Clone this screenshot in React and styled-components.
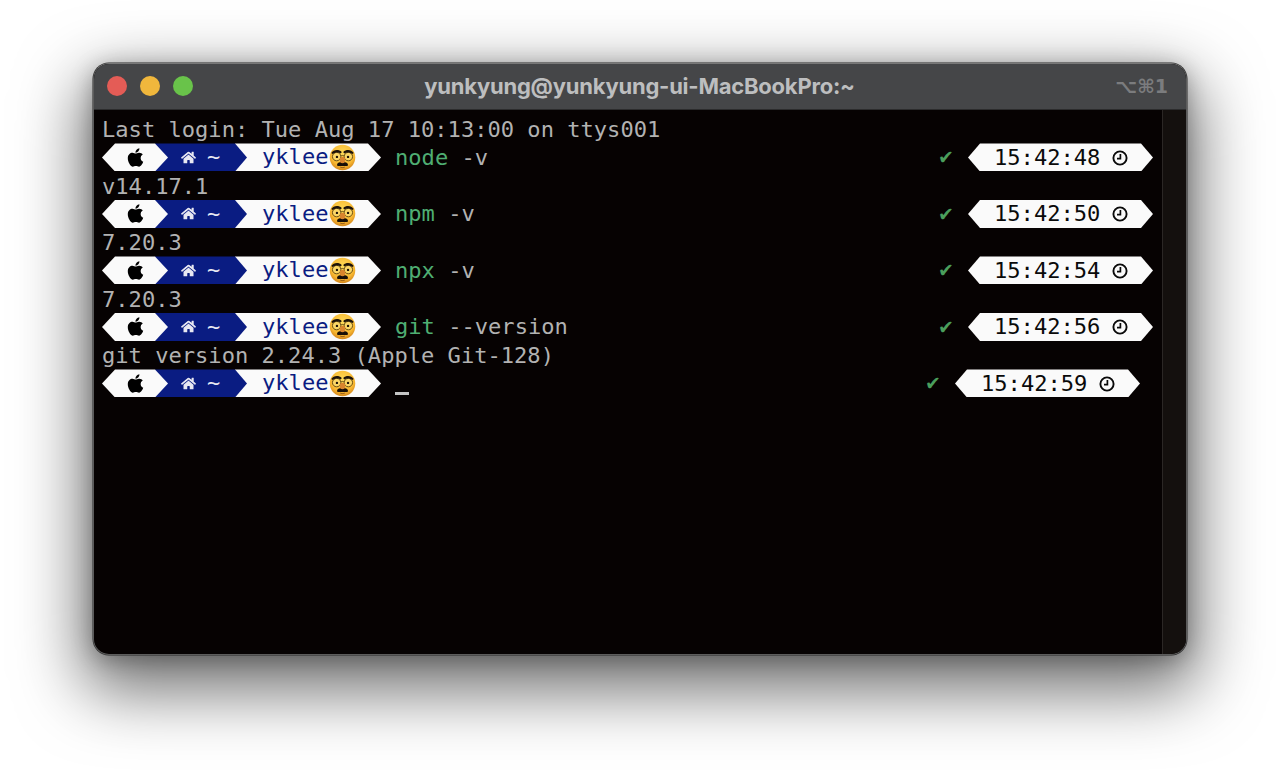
import React from "react";
import styled, { createGlobalStyle } from "styled-components";
import { FaApple, FaHome } from "react-icons/fa";

const GlobalStyle = createGlobalStyle`
  html, body {
    margin: 0;
    height: 100%;
    background: #fff;
    overflow: hidden;
  }
`;

const Page = styled.div`
  width: 1280px;
  height: 778px;
  padding: 63px 93px 123px;
  box-sizing: border-box;
`;

const Window = styled.div`
  height: 100%;
  display: flex;
  flex-direction: column;
  border: 1px solid #5c5c5c;
  border-top-color: #787878;
  border-radius: 16px;
  overflow: hidden;
  background: #060202;
  box-sizing: border-box;
  box-shadow: 0 0 0 0.5px #2a2a2a, 0 26px 66px 10px rgba(0, 0, 0, 0.56), 0 4px 22px rgba(0, 0, 0, 0.28);
`;

const TitleBar = styled.div`
  flex: 0 0 46px;
  display: grid;
  grid-template-columns: 1fr auto 1fr;
  align-items: center;
  padding: 0 18px 1px 13px;
  background: #454648;
  border-bottom: 1px solid #2c2c2d;
  box-sizing: border-box;
`;

const Lights = styled.div`
  display: flex;
  gap: 13px;
`;

const Light = styled.span`
  width: 20px;
  height: 20px;
  border-radius: 50%;
  background: ${(props) => props.color};
`;

const Title = styled.div`
  margin: 0 0 1px 4px;
  font: bold 22px "Inter", "Liberation Sans", sans-serif;
  letter-spacing: -0.22px;
  color: #bdbebf;
`;

const Shortcut = styled.div`
  justify-self: end;
  font: bold 19px "DejaVu Sans", sans-serif;
  color: #7b7c7e;
`;

const Body = styled.div`
  flex: 1;
  display: flex;
  min-height: 0;
`;

const Terminal = styled.div`
  flex: 1;
  padding: 5px 9px 0 8px;
  font: 22.08px/28.25px "DejaVu Sans Mono", monospace;
  color: #b2b2b2;
  white-space: pre;
`;

const Gutter = styled.div`
  flex: 0 0 24px;
  background: #14100e;
  border-left: 1px solid #2b2725;
  box-sizing: border-box;
`;

const Line = styled.div`
  height: 28.25px;
  line-height: 30px;
`;

const PromptRow = styled.div`
  height: 28.25px;
  display: flex;
  align-items: center;
  justify-content: space-between;
  padding-right: ${(props) => (props.$shifted ? "13px" : "0")};
`;

const Left = styled.div`
  display: flex;
  align-items: center;
`;

const Right = styled.div`
  display: flex;
  align-items: center;
  gap: 14px;
`;

const Segment = styled.div`
  position: relative;
  height: 28px;
  display: flex;
  align-items: center;
  box-sizing: border-box;
  flex: none;
`;

const AppleSegment = styled(Segment)`
  z-index: 3;
  width: 66px;
  padding-left: 23px;
  background: #fafafa;
  color: #000;
  font-size: 21px;
  clip-path: polygon(0 50%, 13px 0, calc(100% - 13px) 0, 100% 50%, calc(100% - 13px) 100%, 13px 100%);
`;

const HomeSegment = styled(Segment)`
  z-index: 2;
  width: 92px;
  margin-left: -13px;
  padding-left: 26px;
  gap: 11px;
  background: #0a1c82;
  color: #e8e8f2;
  font-size: 15px;
  clip-path: polygon(0 0, calc(100% - 12px) 0, 100% 50%, calc(100% - 12px) 100%, 0 100%);
`;

const UserSegment = styled(Segment)`
  width: 146px;
  margin-left: -12px;
  padding-left: 27px;
  background: #fafafa;
  color: #0a1c82;
  clip-path: polygon(0 0, calc(100% - 13px) 0, 100% 50%, calc(100% - 13px) 100%, 0 100%);
`;

const Tilde = styled.span`
  font-size: 22px;
  line-height: 1;
`;

const Emoji = styled.svg`
  width: 27px;
  height: 27px;
  margin-left: 1px;
  flex: none;
`;

const Command = styled.div`
  margin: 1px 0 0 14px;
`;

const CommandName = styled.span`
  color: #4fae72;
`;

const Cursor = styled.span`
  display: inline-block;
  width: 14px;
  height: 3px;
  background: #c4c4c4;
  vertical-align: -4px;
`;

const Check = styled.span`
  font: 19px "DejaVu Sans", sans-serif;
  color: #4a9e5c;
`;

const TimePill = styled.div`
  width: 185px;
  height: 28px;
  display: flex;
  align-items: center;
  gap: 12px;
  padding: 1px 0 0 26px;
  box-sizing: border-box;
  background: #fafafa;
  color: #0a0a0a;
  clip-path: polygon(0 50%, 12px 0, calc(100% - 12px) 0, 100% 50%, calc(100% - 12px) 100%, 12px 100%);
`;

const ClockIcon = styled.svg`
  width: 16px;
  height: 16px;
`;

const Clock = () => (
  <ClockIcon viewBox="0 0 16 16" fill="none" stroke="#0a0a0a">
    <circle cx="8" cy="8" r="6.6" strokeWidth="1.9" />
    <path d="M8.4 4V8.6H5" strokeWidth="1.7" />
  </ClockIcon>
);

const DisguiseFace = () => (
  <Emoji viewBox="0 0 36 36">
    <defs>
      <radialGradient id="face" cx="50%" cy="35%" r="65%">
        <stop offset="0%" stopColor="#ffdc5a" />
        <stop offset="72%" stopColor="#f7b731" />
        <stop offset="100%" stopColor="#d4861c" />
      </radialGradient>
    </defs>
    <circle cx="18" cy="18" r="17" fill="url(#face)" />
    <circle cx="10.2" cy="16.8" r="5.6" fill="#fbd766" stroke="#5a4310" strokeWidth="1.2" />
    <circle cx="25.8" cy="16.8" r="5.6" fill="#fbd766" stroke="#5a4310" strokeWidth="1.2" />
    <path d="M15.8 16C17 15 19 15 20.2 16" fill="none" stroke="#5a4310" strokeWidth="1.2" />
    <path d="M3 12C6 7 13 6.5 17 10.5L15.8 12.8C12.5 10.6 8 10.8 4.8 13.4Z" fill="#1d130a" />
    <path d="M33 12C30 7 23 6.5 19 10.5L20.2 12.8C23.5 10.6 28 10.8 31.2 13.4Z" fill="#1d130a" />
    <circle cx="10.6" cy="17.2" r="1.6" fill="#1d130a" />
    <circle cx="25.4" cy="17.2" r="1.6" fill="#1d130a" />
    <path d="M12 25.2C14.5 23.8 21.5 23.8 24 25.2C25.6 26.2 25.6 28.4 24.4 29.2H11.6C10.4 28.4 10.4 26.2 12 25.2Z" fill="#170e07" />
    <ellipse cx="18" cy="21.4" rx="3.7" ry="4.4" fill="#d9852e" />
    <path d="M15 30.8C16.5 31.6 19.5 31.6 21 30.8" fill="none" stroke="#7a4312" strokeWidth="1.1" />
  </Emoji>
);

const Prompt = ({ name, arg, time, cursor }) => (
  <PromptRow $shifted={cursor}>
    <Left>
      <AppleSegment>
        <FaApple />
      </AppleSegment>
      <HomeSegment>
        <FaHome />
        <Tilde>~</Tilde>
      </HomeSegment>
      <UserSegment>
        yklee
        <DisguiseFace />
      </UserSegment>
      <Command>
        {cursor ? (
          <Cursor />
        ) : (
          <>
            <CommandName>{name}</CommandName> {arg}
          </>
        )}
      </Command>
    </Left>
    <Right>
      <Check>✔</Check>
      <TimePill>
        {time}
        <Clock />
      </TimePill>
    </Right>
  </PromptRow>
);

const App = () => (
  <Page>
    <GlobalStyle />
    <Window>
      <TitleBar>
        <Lights>
          <Light color="#e45c56" />
          <Light color="#f0b73c" />
          <Light color="#69c34a" />
        </Lights>
        <Title>yunkyung@yunkyung-ui-MacBookPro:~</Title>
        <Shortcut>⌥⌘1</Shortcut>
      </TitleBar>
      <Body>
        <Terminal>
          <Line>Last login: Tue Aug 17 10:13:00 on ttys001</Line>
          <Prompt name="node" arg="-v" time="15:42:48" />
          <Line>v14.17.1</Line>
          <Prompt name="npm" arg="-v" time="15:42:50" />
          <Line>7.20.3</Line>
          <Prompt name="npx" arg="-v" time="15:42:54" />
          <Line>7.20.3</Line>
          <Prompt name="git" arg="--version" time="15:42:56" />
          <Line>git version 2.24.3 (Apple Git-128)</Line>
          <Prompt time="15:42:59" cursor />
        </Terminal>
        <Gutter />
      </Body>
    </Window>
  </Page>
);

export default App;
